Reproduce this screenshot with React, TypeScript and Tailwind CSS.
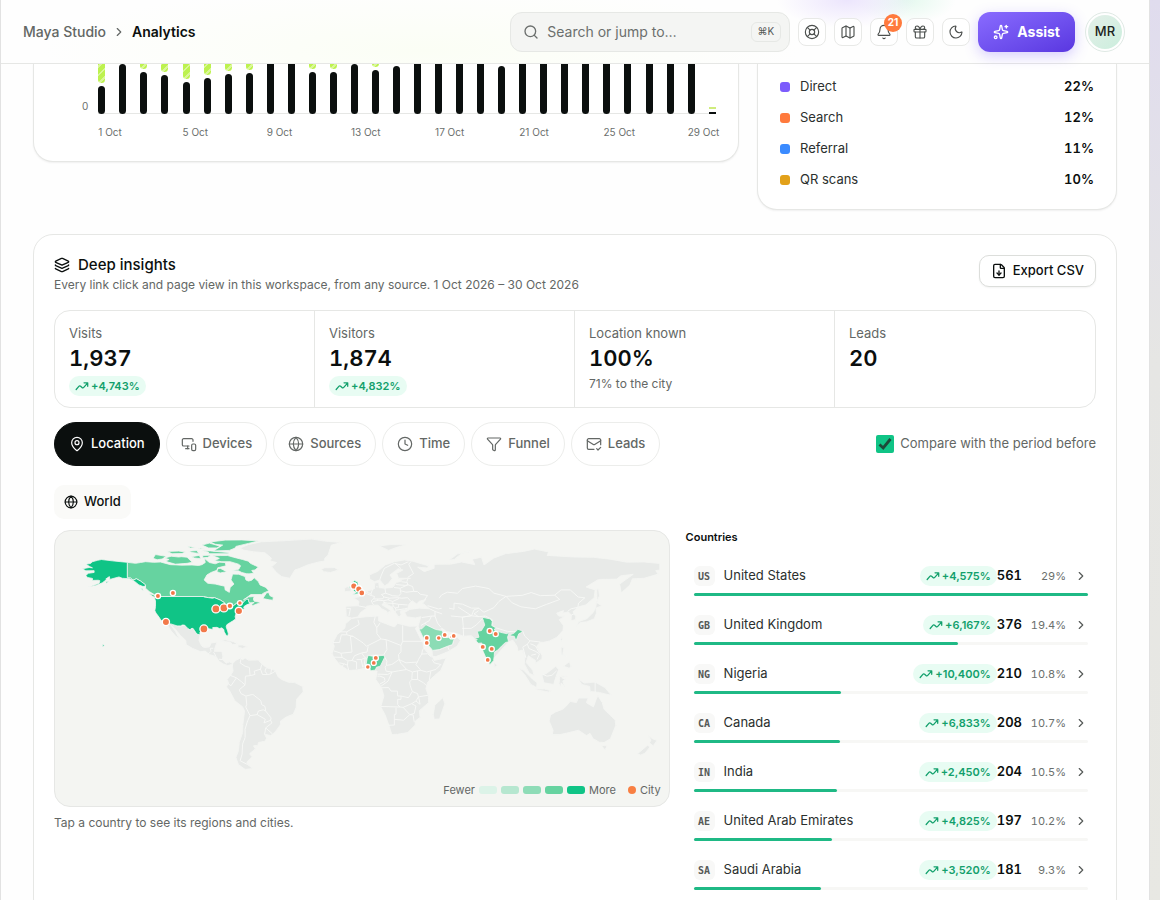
import React from 'react';
import {
  Bell,
  ChevronRight,
  Clock,
  FileDown,
  Funnel,
  Gift,
  Globe,
  Layers,
  LifeBuoy,
  MailCheck,
  Map as MapIcon,
  MapPin,
  MonitorSmartphone,
  Moon,
  Search,
  Sparkles,
} from 'lucide-react';

// px height of the lower (black) segment of each day
const days = [
  28, 50, 42, 39, 32, 36, 40, 41, 60, 60, 42, 42, 50, 44, 48, 60, 60, 60, 60, 48, 60, 60, 60, 60, 60, 60, 60, 60, 60, 2,
];

const channels = [
  { name: 'Direct', share: '22%', color: 'bg-[#7c5cfc]' },
  { name: 'Search', share: '12%', color: 'bg-[#ff7a3d]' },
  { name: 'Referral', share: '11%', color: 'bg-[#3b8bff]' },
  { name: 'QR scans', share: '10%', color: 'bg-[#e2a11a]' },
];

const stats = [
  { label: 'Visits', value: '1,937', change: '+4,743%' },
  { label: 'Visitors', value: '1,874', change: '+4,832%' },
  { label: 'Location known', value: '100%', note: '71% to the city' },
  { label: 'Leads', value: '20' },
];

const tabs = [
  { label: 'Location', icon: MapPin },
  { label: 'Devices', icon: MonitorSmartphone },
  { label: 'Sources', icon: Globe },
  { label: 'Time', icon: Clock },
  { label: 'Funnel', icon: Funnel },
  { label: 'Leads', icon: MailCheck },
];

const countries = [
  { code: 'US', name: 'United States', change: '+4,575%', visits: 561, share: '29%' },
  { code: 'GB', name: 'United Kingdom', change: '+6,167%', visits: 376, share: '19.4%' },
  { code: 'NG', name: 'Nigeria', change: '+10,400%', visits: 210, share: '10.8%' },
  { code: 'CA', name: 'Canada', change: '+6,833%', visits: 208, share: '10.7%' },
  { code: 'IN', name: 'India', change: '+2,450%', visits: 204, share: '10.5%' },
  { code: 'AE', name: 'United Arab Emirates', change: '+4,825%', visits: 197, share: '10.2%' },
  { code: 'SA', name: 'Saudi Arabia', change: '+3,520%', visits: 181, share: '9.3%' },
];

// Outlines are longitude / latitude pairs, projected by the group transform
const land = [
  // Greenland
  'M-73 78.2L-68 80.3L-60 82L-50 82.4L-40 83L-30 83.6L-22 82.4L-12 81.5L-18 80L-19 77L-20 74L-22 72L-22 70.4L-25 70L-32 68.2L-37 66L-40 65L-43 60L-48 61L-51 63.5L-54 67L-51 69.5L-55 70.5L-54 72L-58 75.4L-65 76L-71 77Z',
  // Mexico and Central America
  'M-117.1 32.5L-114.8 32.5L-111 31.3L-108.2 31.3L-106.5 31.8L-104.7 29.9L-103.2 28.9L-101.4 29.8L-99.1 26.4L-97.2 25.9L-97.8 22.5L-96.2 19.2L-94.5 18.2L-91.5 18.6L-90.4 21L-87 21.5L-88.2 18L-88.5 15.8L-84 15.8L-83.4 13L-83.7 11L-81.5 8.8L-79.5 9.5L-77.4 8.6L-78.3 8L-80.4 7.4L-83 8.3L-85.7 10L-87.5 12.9L-91.5 14L-94 16.1L-97 15.8L-101.8 17.8L-105.5 20L-105.7 22.5L-109 25.6L-112.8 30.2L-114.7 31.7L-112 28L-109.5 23.2L-112 25.3L-114.5 28.2L-116 30.5Z',
  // Caribbean
  'M-84.8 22L-82 23L-77 21.8L-74.3 20.2L-77.5 20L-79 21.6Z',
  'M-74.3 19.7L-71.7 19.8L-68.5 18.6L-71.5 17.8L-74.2 18.4Z',
  // South America
  'M-77.4 8.6L-75.5 10.6L-72.5 12L-71.5 10.8L-70 12L-68 10.6L-62 10.7L-60 8.5L-57 6L-52 4.5L-50 0.5L-48 -1L-44 -2.7L-40 -2.9L-35.3 -5.3L-35 -8.5L-39 -13L-39.2 -17.8L-41 -22L-45 -23.5L-48.6 -26L-48.7 -28.3L-52 -32.8L-54.5 -34.8L-58.3 -34L-57 -36.4L-58 -38.2L-62 -39L-62.3 -40.8L-65 -41L-63.8 -42.8L-67.3 -45.8L-65.8 -47.6L-69 -50.8L-68.4 -52.4L-65.3 -54.7L-70 -55.2L-74 -52.3L-75.5 -48L-74 -44L-73.5 -39L-71.5 -33L-71.3 -28L-70.3 -20L-71.5 -17.5L-76.2 -13.8L-79.2 -8L-81.2 -5.5L-80 -3L-80.8 -1L-78.8 1.4L-77.2 4L-77.6 7Z',
  // Iceland, Ireland, Svalbard
  'M-24 65.5L-22 66.3L-16 66.4L-13.7 65L-18.5 63.5L-22.5 64Z',
  'M-10 52L-6.3 52.2L-6 54L-8 55.2L-10 54Z',
  'M11 79.5L18 80.3L27 80.2L21 78.5L16.5 76.8Z',
  // Iberia to Scandinavia and on through Russia to the Pacific
  'M-9.3 43.1L-1.8 43.4L-1.3 46L-4.6 48.3L-1.6 48.7L1.8 50.9L4.5 52.5L8 53.7L8.2 57L10.6 57.6L10.8 54.3L14.2 54L19 54.5L21.3 57.4L24.4 58.4L23.5 59.3L29.8 60L22.5 60L21.4 63L25.3 65L22.3 65.8L17.3 62L18.8 60L16.5 57L14.2 55.4L11.2 59L8 58L5.2 59.5L5 62L10 64.2L14.5 68L20 70L26 71L31 70.3L40.5 67.5L40 66.2L34 66.7L38 64L44 66L44 68.4L54 68.5L60.5 69.8L68.5 68.2L67 71.5L72.5 72.7L74 68L80 72.2L87 74.8L98 76.2L104.5 77.6L113 75.8L112 73.8L128 72.8L140 72.6L150 71.5L160 69.7L170.5 69.8L180 68.9L180 65L177.5 64.6L179 62.5L170.5 60L163.5 59.7L162 56L156.8 51.2L155.8 56.5L164 62.4L156.5 61.5L154 59.5L143 59.3L135.5 54.7L141 53L140.4 48.3L135.5 44L131 42.8L127.6 39.8L129.4 36.8L129 35L126.5 34.5L126.7 37.7L125 39.7L121.5 39L122 40.5L117.8 39L119 37.2L122.5 37L119.3 35L121.9 31.5L121.6 28.5L118 24.5L113.5 22.2L109.8 21.4L107.8 21.5L105.8 19L109 13.5L109 11.4L105 8.7L105 10.5L102.5 12.2L100.8 13.4L99.4 9.3L103.4 4.5L104.2 1.4L101.3 2.8L98.4 8.3L98.7 13L97.2 16.8L94.5 16L94 18.8L91.5 22.7L88.8 21.7L77.5 9L72.8 20.5L70 21L68 23.8L66.5 25.4L61.5 25.1L57 26.9L51.5 27.9L48.5 30L48 29.5L50.2 26.5L51.5 24.5L56.3 26.2L59.8 22.5L57.7 19L52.2 15.7L45 12.8L43 13L42.7 16.5L39 21.2L35 28L34.9 29.5L34.3 31.2L36 36.8L32.5 36.1L27.5 36.8L26.2 39.4L29.3 41.2L35 42L41.5 41.5L37 45L39 47.2L35 46.2L33.5 44.5L30.7 46.5L28.5 44L28.2 41.5L23.5 40.4L24 38L22.8 36.5L19.4 41L19 42.4L13.6 45.3L12.5 44L16 41.8L18.4 40L16.5 39.8L16 38L15.6 40L12.3 41.7L10.3 43.8L7.5 43.8L3.2 43.2L3 41.8L-0.4 39.4L-2 36.7L-5.6 36L-9 37Z',
  'M53 71L58 74.6L68 76.8L61 75.3L56 71.3Z',
  // Japan, Sakhalin, Taiwan, Sri Lanka
  'M130 31.5L131 33.8L136 35.6L140 39.5L141.5 43L141.8 45.4L145 43.5L141.5 42L141.8 39L140.5 35.6L136 33.8L132 33.3Z',
  'M143 54L143.6 49.5L142.2 46.2L142 53Z',
  'M121.5 25.2L120.2 23L121 22Z',
  'M80 9.6L81.8 7.5L80.3 6Z',
  // Africa
  'M-5.8 35.8L3 36.8L10.5 37.2L10.5 34.3L15.5 32.3L20 30.6L22 32.8L29 31L34.2 31.2L32.6 29.8L35.5 24L37.3 21L37.5 18.5L39.5 15.5L43.2 12.3L44 10.5L51.2 11.9L48 4.5L44 1.2L40 -2.7L39 -6.5L40.5 -10.8L40.6 -15L35 -19.8L35.5 -23.8L32.7 -26L32.5 -28.5L28 -33L22 -34L18.5 -34.2L17 -29.5L14.5 -22.5L11.8 -17.5L13.7 -11L12.2 -5.8L8.8 -1L9.6 4L6 4.3L4.3 6.4L-2 4.8L-7.6 4.4L-13 8L-16.7 12.5L-17.4 14.7L-16.2 19L-17 21.2L-14.5 26L-9.8 30L-9.5 32.5Z',
  'M49.2 -12L50.4 -15.7L47.2 -24.8L44 -25L43.5 -22L44.4 -16.5Z',
  // Islands of South East Asia
  'M95.3 5.6L98 4.5L103.5 -1L106 -3L105.7 -5.8L102.3 -4L98.7 1.7Z',
  'M105.3 -6.7L110.5 -6.8L114.5 -7.8L113 -8.5L106.5 -7.4Z',
  'M109 1.5L111.5 2.5L115.5 5.5L117.2 7L119 5L117.5 1L116 -4L110.2 -3Z',
  'M119.3 -3.5L119.8 0.7L125 1.4L120.8 0L123 -1L121.5 -2L122.5 -5L120.5 -3L120.3 -5.5Z',
  'M120.5 18.4L122.2 18.3L121.5 14.3L124 13L120.6 14.2Z',
  'M122 7L125.5 9.7L126.4 7L125.4 5.8Z',
  'M131 -0.8L134.5 -3.2L141 -2.6L147 -6L150.7 -10.4L147 -9.7L143.5 -8.8L138 -8.2L137.8 -5.2L133 -4Z',
  // Australia and New Zealand
  'M114.2 -22.5L117 -20.7L121.5 -19L123.7 -17L126 -14.2L129.7 -15L131 -12.2L136.8 -12.2L135.7 -15L140 -17.6L141.7 -12.8L142.7 -10.8L145.3 -15L146.4 -19L149.5 -22L153.1 -25.5L153.4 -28.8L150.2 -36.8L146.4 -39L143.5 -38.8L139.7 -36.6L138 -33.5L135.8 -34.8L131 -31.6L124 -33.3L119.8 -34.2L115.2 -34.2L115.7 -31.7L113.3 -26Z',
  'M144.8 -40.8L148.2 -41L147 -43.5Z',
  'M172.8 -34.5L175.5 -36.7L178.3 -37.8L176 -41L173.8 -39.2L174.7 -37.5Z',
  'M172.7 -40.6L174 -41.8L171 -45.5L168.5 -46.5L166.6 -45.8Z',
];

const borders = [
  // Americas
  'M-92 14.5L-90.5 16L-91 17.8L-89.2 17.8M-89 15.5L-87.5 13M-83.6 11L-85.7 11.2',
  'M-78.8 1.4L-75.2 0L-72 -2.5L-70 -4.3L-73.5 -7.2L-72.5 -9.5L-69.5 -11L-69 -16L-69.6 -17.6L-67 -22.8L-68.5 -26L-70 -31L-70 -36L-71.5 -40L-71.8 -46L-73 -50L-68.5 -52.3',
  'M-80.3 -3.5L-78.5 -4.8L-75.2 0M-72.3 12L-73 9L-70 7L-67.4 6.2L-67 1.3L-69.8 1L-70 -4.2M-67 1.3L-64 2L-64.5 4L-60.7 5.2L-60 8M-60.7 5.2L-59.5 2L-56.5 2L-54.5 2.3L-51.7 4M-57.2 6L-58 4L-56.5 2M-54 5.6L-54.5 2.3',
  'M-69.5 -11L-65.3 -10L-60.5 -13.8L-60 -16.2L-58 -17.2L-57.6 -20L-59 -19.3L-62 -20L-62.7 -22.2L-67 -22.8M-57.6 -20L-55.8 -22.3L-54.3 -24.2L-54.6 -25.6L-58.6 -27.2L-57.8 -25L-62.7 -22.2M-54.6 -25.6L-53.8 -27.2L-57.6 -30.2L-53.5 -33.8M-57.6 -30.2L-58.2 -34',
  // Europe
  'M-1.8 43.4L3.1 42.4M-8.8 41.9L-6.5 41.8L-7.4 37.2M2.5 51L6 49.6L8.1 49L7.5 47.6L6 46.4L7.5 43.8M3.4 51.4L6 50.8L6.8 53.4M6 50.8L6 49.6M7.5 47.6L9.6 47.5L10.4 46.8L7 45.9M9.6 47.5L13 47.6L13.8 48.7L12.2 50.2L14.8 51L14.3 54',
  'M10.4 46.8L13.7 46.5L16.2 47L17 48L13.8 48.7M14.8 51L18.8 49.5L22.5 49.2L24 50.8L23.6 52.5L23.5 54L19.8 54.4M17 48L22 48.3L24.5 48L28 48.3L30 46M16.2 47L19 46L22.8 47.8M19 46L19 44.9L22.5 44.3L28 43.9M13.7 46.5L13.6 45.5L15.7 45L19 44.9M19 44.9L19.3 43.2L18.5 42.4M19.3 43.2L20.5 42.2L22.4 42.3L22.5 44.3M20.5 42.2L21 40.8L20.2 39.6M21 40.8L26.3 41.6L28 42',
  'M23.6 52.5L27 51.6L31.7 52.1L34 52L35.5 50.4L40 49.6L38.2 47.1M31.7 52.1L31 55L28.2 56.1L23.5 54M28.2 56.1L27.5 58L28.1 59.5M21 56.2L26.5 55.7L28.2 56.1M24.3 57.9L27.5 57.5M11.2 59L12.2 62L14 66L20 69L24 68L28.5 70M24 65.8L20.5 69M30 70L28.6 68.5L31.5 62.8L28 60.5M9 54.9L10 54.8',
  // Asia
  'M47 48L48.5 50L52 51.6L58 51L61 53.8L69 55.3L77 53.8L80 51L87.3 49.1L83 46L80 42.3L74 39.5L70.8 42L66.5 42L61 44.4L56 45L55.9 41.3L53 42M87.3 49.1L97 49.7L102.5 51.4L108 49.5L116.6 49.8L119.7 47.2L111.5 44.2L105 41.6L96.3 42.8L91 45.2L87.3 49.1M116.6 49.8L120.5 53L126 53L130.8 48.7L134.8 48.2L131 45L130.6 42.5L126.5 41.6L124.4 40',
  'M126.6 37.8L128.4 38.6M40 43.5L46.5 41.5L48.5 41.9M41.5 41.5L44.5 40L48.8 38.5M44.5 40L44.5 37.2L42.4 37.2L36.5 36.3M44.5 37.2L46 33L48 30.5M42.4 37.2L41 34.4L38.8 33.2L36 31.5M38.8 33.2L39 32L44.7 29.2L48.4 28.6M54 37.3L61 36.6L61.5 31.4L61.7 25.1M61 36.6L66.5 37.4L71 36.8L74.8 37.3L69.3 31.8L66.3 29.8L60.9 29.8M61 36.6L66.5 37.4L58.5 42.6M66.5 37.4L68 41L71 42M71 36.8L68 38.5L70.8 40.5',
  'M74.8 37.3L79 35L78.7 31.5L81 30.2L88 28L92 27.8L97.3 28.2M97.3 28.2L98.7 25L101.7 22.3L107.9 21.6M101.7 22.3L100.2 20.3L97.4 18.5L99.3 12M100.2 20.3L101.1 17.7L105 16L107.5 14.4L106 11M102 20.5L105 19.3L107.5 15M102.5 13.6L105.5 14.3M109.6 2L112 1L115 1.5L117.8 4.2M141 -2.6L141 -9M43 16.6L47 17L52 19L53.1 16.6M52 19L55 20L55.7 22.5L51.6 24.2',
  // Africa
  'M-8.7 27.7L-8.7 25.9L-4.9 25L1.2 21L3.2 19L11.9 23.4L15 23L24 19.5L25 22L25 31.6M-8.7 27.7L-1.2 32.2L-2 35M8.5 36.9L7.6 33.5L9.4 30.2L9.5 26.5L11.9 23.4M9.4 30.2L11.5 33.2M25 22L36.8 22M-13 27.7L-8.7 27.7M-17 21.3L-13 21.3L-12 25.9L-8.7 25.9M-4.9 25L-6.5 25L-5.5 15.5L-12.2 14.8L-16.4 16.2M-12.2 14.8L-11.5 12.3L-16.7 12.5M-11.5 12.3L-8 10.2L-8.3 7.6L-7.5 4.4M-13.2 9L-10.5 8.5L-11.4 6.8M-10.5 8.5L-8.3 7.6',
  'M-8 10.2L-5.5 10.4L-2.8 9.6L-2.8 5.2M-5.5 10.4L-4 13.3L0.2 15L3.5 15.5L4.2 19M0.2 15L2.4 12L0 11L-2.8 11M0 11L1 6.2M2.4 12L1.6 6.4M2.4 12L3.6 11.7L2.7 6.4M3.6 11.7L4.2 13.5L13.5 13.7L15.5 17L15 23M13.5 13.7L14.2 12.5L15.5 10L15.2 7.5L18.5 8L22.8 11L22.5 14L24 15.7L24 19.5',
  'M22.8 11L27 9L33.9 9.5L34.5 11L36.5 14.3L37 17L38.5 18M36.5 14.3L40 14.5L42.4 12.5M43 11L42.8 10.9L44 9L48 8L45 5L42 4.2L41 -1.6M42 4.2L39.5 3.5L36 4.5L34 4.2L30.8 3.5L27.4 5L22.5 4.2L18.6 3.5L15 4L14.4 6.5L15.2 7.5M33.9 9.5L33 8L36 4.5M27.4 5L24 8.7L22.8 11M34 4.2L34 -1L37.6 -3L39.2 -4.6M34 -1L30.5 -1L30.8 3.5M30.5 -1L29.2 -2.5L29.5 -4.5L30.8 -8.3L34 -9.5L34.5 -11.5L40.4 -10.5',
  'M9.8 2.2L16 2L18.6 3.5L16.2 -2L12 -5M9.8 1L11.3 1L14 0L14.4 -2L11.2 -3.8M12.3 -6L16.5 -5.9L18 -8L21.8 -8L22 -11L24 -11L24 -13L22 -13L22 -16.2L23.4 -17.6L12 -17.3M24 -11L28.5 -12L30.8 -8.3M23.4 -17.6L25.3 -17.8L30.4 -15.6L33 -14L34.5 -11.5M25.3 -17.8L29.3 -22.2L32 -21.5L33 -17L30.4 -15.6M33 -14L35.5 -16L34.6 -11.5M21 -17.9L21 -22L20 -22L20 -28.5L16.5 -28.6M20 -25L25.5 -25.6L29.3 -22.2L31.3 -22.4L32 -26.8',
];

const unitedStates = [
  'M-124.7 48.4L-123 49L-95.2 49L-94.6 48.7L-92 48.3L-89.6 48L-88.4 48.3L-84.8 46.8L-83.6 46L-82.5 45.3L-82.4 43L-83.1 42L-82.5 41.7L-79 42.7L-79 43.3L-76.8 43.6L-75 45L-71.5 45L-70.3 46.2L-69.2 47.4L-68 47.3L-67.8 45.7L-67 44.8L-69 44L-70.6 43L-70.8 42.2L-70 41.7L-72 41.2L-74 40.6L-74.2 39.5L-75.5 38.5L-76 37L-75.7 35.5L-77.5 34.2L-79 33.3L-81 32L-81.4 30.7L-80.5 28.2L-80.1 26.5L-80.4 25.2L-81.3 25.5L-82.6 27.7L-82.8 29.1L-84 30.1L-85.4 29.7L-87 30.4L-89.5 30.3L-89.4 29.1L-91.5 29.5L-94 29.7L-95.5 28.9L-97.2 27.6L-97.2 25.9L-99.1 26.4L-100.5 28.5L-101.4 29.8L-102.5 29.7L-103.2 28.9L-104.7 29.9L-106.5 31.8L-108.2 31.8L-108.2 31.3L-111 31.3L-114.8 32.5L-117.1 32.5L-118.4 34L-120.6 34.6L-121.9 36.6L-123.7 39L-124.4 40.4L-124 43L-124 46.3Z',
  'M-141 60.3L-141 69.6L-145 70L-150 70.5L-156.6 71.3L-159 70.8L-162 70L-163 69L-166 68.4L-163.5 67L-162 66.3L-164 66.5L-168 65.7L-166 64.5L-161 64.6L-161 63.5L-164.5 63L-166 61.7L-165 60.5L-162 59.9L-162 58.7L-158.5 58.8L-157.5 58.5L-158 57L-162 55.5L-164.8 54.7L-160 55.6L-156 57.3L-153.5 59.2L-154 59.5L-151.8 61L-151.5 59.3L-149 60L-146 60.8L-144 60L-139.5 59.7L-136.7 58.2L-134 56L-131.5 55L-130 55.3L-130.2 56.2L-133 58.3L-135.5 59.7L-137.5 58.9L-139 60.1Z',
  'M-154 57.9L-152.3 58.2L-153.5 57Z',
  'M-156 20.4L-154.8 19.5L-155.8 18.7Z',
];

const canada = [
  'M-141 69.6L-136 69L-133 69.5L-130 70L-125 69.6L-121 69.8L-115 68.2L-108 67.9L-102 68L-98 67.7L-96 68.2L-94 69.5L-94.5 72L-91.5 69.5L-88 68.7L-85.5 69.7L-82 69.5L-81.5 67.5L-86.5 66.3L-87 64.8L-90.5 63.5L-93 62L-94.7 59L-92.5 57L-88 56.5L-82.3 55.2L-82 53L-79.5 51.5L-79 54.5L-76.7 56.5L-78.5 59L-77.5 62.5L-73.8 62.4L-70 61L-69.5 59L-68 58.3L-66 58.8L-64.5 60.3L-62 58L-61 56L-57.5 54.5L-55.7 52.5L-59 51L-60 50.2L-66.5 50.2L-69.5 48L-71 47L-68 48.7L-64.5 49L-65 47.5L-64.5 46.2L-61 45.5L-61.5 45L-65.5 43.5L-66 44.3L-64.5 45.4L-67 45.2L-67.8 45.7L-68 47.3L-69.2 47.4L-70.3 46.2L-71.5 45L-75 45L-76.8 43.6L-79 43.3L-79 42.7L-82.5 41.7L-82.4 43L-82.5 45.3L-84.8 46.8L-88.4 48.3L-92 48.3L-95.2 49L-123 49L-124.8 50.2L-127.8 52L-130 54L-130 56L-133 58.3L-135.5 59.7L-137.5 58.9L-139 60.1L-141 60.3Z',
  'M-128 50.8L-125 50L-123.5 48.5L-125.5 48.8Z',
  'M-133 54L-131.8 53.8L-131.3 52.3Z',
  'M-59.3 47.8L-57 51.3L-55.7 51.3L-55 49.5L-53 48.5L-53.2 46.8L-55.5 47Z',
  'M-89.5 73.5L-85 73.7L-80.5 73.7L-77 72.7L-71.5 71.3L-68 70.3L-66.8 69L-62 66.8L-64 65L-66 64.7L-64.8 63L-68.8 62.5L-66 61.9L-72 63.5L-74 64.5L-78 64.5L-73.8 65.5L-72.7 67.5L-74 68.5L-79 70L-84 70L-88.5 70.6L-85.5 72Z',
  'M-117 69.9L-112 68.5L-105 69L-101.8 69.6L-105 72.7L-108.5 73L-110 72.8L-114.5 73.3L-118.5 72.2L-115.8 71.3L-117.5 70.6Z',
  'M-125.5 72L-124 74.3L-117.5 73.2L-120 71.6L-123 71.2Z',
  'M-117 76.2L-110 76.4L-106 75.8L-108 74.9L-114 74.8Z',
  'M-102.5 73L-97.5 73.8L-96.7 71.8L-100.5 72.2Z',
  'M-95.5 73.8L-90.5 73.9L-92.5 72.6L-95.5 72.3Z',
  'M-104 76.3L-99 76.7L-98 75L-102 75.5Z',
  'M-96.5 76.7L-91 76.5L-80 75.5L-80.2 74.8L-91.7 74.8L-92.2 75.8Z',
  'M-96 80L-91.5 81.2L-85 79.3L-87 78.3L-92 78.3Z',
  'M-91 81.9L-82 83L-72 83.1L-61.8 82.5L-68 81L-75.5 79.2L-76 78.2L-79.5 76.8L-89 76.5L-87 77.8L-83.5 80L-88 80.5Z',
  'M-105 79.3L-99.5 78.6L-103 78.2ZM-98 78.2L-94.5 77.8L-97 77.6Z',
  'M-86.5 65.7L-85 66L-81 64L-85 63.2L-87 64Z',
];

const unitedKingdom = [
  'M-5.5 50.1L1.3 51.2L1.7 52.7L0 53.5L-1.8 55.5L-2 57.7L-4 58.6L-6.2 57L-3.2 54.7L-4.7 52.5L-3 51.4Z',
  'M-8 54.3L-5.6 54.4L-6.5 55.2Z',
];

const nigeria = ['M3.6 11.7L4.2 13.5L7 13L13.5 13.5L14.2 12.5L11.5 7L9.2 6.4L8.5 4.7L6 4.3L4.3 6.4L2.7 6.4Z'];

const saudi = [
  'M34.9 29.4L36.5 29.5L39 32L44.7 29.2L48.4 28.5L50.2 26.5L51 24.5L51.6 24.2L55.2 24.8L56.2 26L56.2 24L55.7 22.5L55 20L52 19L47 17L43 16.5L42.3 17.5L39 21.2L37 25Z',
];

const india = [
  'M73 36.5L77.8 35.5L79 34L78.7 31.5L81 30.2L80.2 28.8L84 27.4L88.1 26.5L88.2 27.9L89 26.5L88.2 24.5L88.8 21.7L87 21.3L85 19.5L82.3 16.7L80.3 15.5L80.2 13L79.8 10.3L77.6 8L76.3 9.8L74.8 13L73 17L72.7 21L70.8 20.8L69 22.3L70 23L68.2 23.7L71 24.5L70 28L72.5 28.5L74.5 31.8L73.8 34Z',
  'M89.8 26L92 26.8L94.5 29.2L97 28.3L97 27.5L95 26.5L93.3 22.3L92.3 25L89.9 25.3Z',
];

// x, y and radius on the map canvas
const cities = [
  [104, 66, 2.6], [119, 63, 2.6], [112, 92, 3.6], [150, 99, 4], [162, 79, 4], [170, 78, 4], [176, 76, 2.8],
  [185, 81, 3.7], [186, 73, 2.4], [300, 56, 3.2], [305, 59, 3.2], [308, 63, 3], [373, 108, 2.5], [373, 113, 2.5],
  [385, 108, 2.4], [391, 105, 2.5], [398, 107, 2], [400, 106, 2.5], [322, 128, 2.6], [320, 133, 2.5],
  [314, 137, 2.4], [436, 101, 2.6], [442, 104, 2.6], [429, 117, 2.6], [438, 119, 2.6], [434, 130, 2.5],
];

const Shapes: React.FC<{ paths: string[]; fill: string }> = ({ paths, fill }) => (
  <path d={paths.join('')} fill={fill} stroke="#f4f5f2" strokeWidth={0.8} strokeLinejoin="round" vectorEffect="non-scaling-stroke" />
);

const WorldMap: React.FC = () => (
  <svg viewBox="1 1 614 275" className="block w-full" role="img" aria-label="Visits by country">
    <g transform="translate(307.4 147.9) scale(1.66 -1.66)">
      <Shapes paths={land} fill="#e8eae8" />
      <path d={borders.join('')} fill="none" stroke="#f7f8f6" strokeWidth={0.9} strokeLinejoin="round" vectorEffect="non-scaling-stroke" />
      <Shapes paths={canada} fill="#66d3a0" />
      <Shapes paths={unitedStates} fill="#10c486" />
      <Shapes paths={unitedKingdom} fill="#35cb92" />
      <Shapes paths={nigeria} fill="#5fd09d" />
      <Shapes paths={saudi} fill="#8bdcb5" />
      <Shapes paths={india} fill="#66d3a0" />
    </g>
    {cities.map(([x, y, r]) => (
      <circle key={`${x}-${y}`} cx={x} cy={y} r={r} fill="#f2794a" stroke="#ffffff" strokeWidth={1.3} />
    ))}
  </svg>
);

const Trend: React.FC<{ value: string }> = ({ value }) => (
  <span className="inline-flex h-5 items-center gap-0.5 rounded-full bg-[#e8fcf3] px-1.5 text-[11px] font-semibold text-[#12a06c]">
    <svg viewBox="0 0 24 24" className="h-3.5 w-3.5" fill="none" stroke="currentColor" strokeWidth="2.2" strokeLinecap="round" strokeLinejoin="round">
      <path d="M2 18l4.6-5.4c1-1.2 2-1.3 3.1-.3l2.3 2.2c1 1 2.1.9 3-.2L21.5 7M15.5 6.5h6.3v6" />
    </svg>
    {value}
  </span>
);

const iconButton =
  'relative flex h-7 w-7 items-center justify-center rounded-lg border border-[#e8e9e7] bg-white text-[#4b4f4d]';

const Header: React.FC = () => (
  <header className="relative z-10 flex h-16 shrink-0 items-center justify-between border-b border-[#e6e7e5] bg-[radial-gradient(70px_28px_at_846px_0px,#ece5fd,transparent),radial-gradient(50px_24px_at_905px_0px,#e4f9ee,transparent),radial-gradient(380px_64px_at_420px_50px,#fbfef5,transparent)] pr-6 pl-[22px]">
    <nav aria-label="Breadcrumb" className="flex items-center gap-1.5 text-sm">
      <a href="#studio" className="font-medium text-[#636765]">Maya Studio</a>
      <ChevronRight className="h-3.5 w-3.5 text-[#636765]" />
      <span className="font-semibold text-[#0b0f0e]">Analytics</span>
    </nav>
    <div className="flex items-center gap-2">
      <button type="button" className="flex h-10 w-[280px] items-center gap-2 rounded-xl border border-[#e6e8e5] bg-[#f4f5f3] pr-2 pl-3 text-sm text-[#6b6f6d]">
        <Search className="h-4 w-4" />
        <span className="flex-1 text-left">Search or jump to…</span>
        <kbd className="flex h-5 items-center rounded-md border border-[#e6e8e5] px-1.5 font-['Inter',sans-serif] text-[10px] text-[#565a58]">⌘K</kbd>
      </button>
      <button type="button" aria-label="Help" className={iconButton}><LifeBuoy className="h-4 w-4" strokeWidth={1.7} /></button>
      <button type="button" aria-label="Tour" className={iconButton}><MapIcon className="h-4 w-4" strokeWidth={1.7} /></button>
      <button type="button" aria-label="Notifications" className={iconButton}>
        <Bell className="h-4 w-4" strokeWidth={1.7} />
        <span className="absolute -top-[5px] -right-[5px] flex h-[18px] min-w-[18px] items-center justify-center rounded-full bg-[#ff7a3d] px-1 text-[10px] font-bold text-white">21</span>
      </button>
      <button type="button" aria-label="Rewards" className={iconButton}><Gift className="h-4 w-4" strokeWidth={1.7} /></button>
      <button type="button" aria-label="Dark mode" className={iconButton}><Moon className="h-4 w-4" strokeWidth={1.7} /></button>
      <button type="button" className="flex h-10 items-center gap-2 rounded-xl bg-linear-to-br from-[#8a6bff] to-[#5a36e0] px-[15px] text-sm font-bold text-white shadow-[0_4px_14px_rgba(124,92,252,0.3)]">
        <Sparkles className="h-4 w-4" />
        Assist
      </button>
      <button type="button" className="ml-0.5 flex h-10 w-10 items-center justify-center rounded-full border border-[#dfe9e4] bg-white p-0.5 text-[13px] font-medium text-[#1b2320]">
        <span className="flex h-full w-full items-center justify-center rounded-full bg-linear-to-br from-[#e4efe9] to-[#cbeedd]">MR</span>
      </button>
    </div>
  </header>
);

const DailyChart: React.FC = () => (
  <section className="rounded-b-[20px] border border-t-0 border-[#e6e7e5] bg-white pr-[22px] pb-[22px] pl-12 shadow-[0_1px_2px_rgba(0,0,0,0.06)]">
    <div className="flex gap-2.5">
      <span className="flex h-[50px] items-end text-[10px] leading-4 text-[#6b6f6d]">0</span>
      <div className="relative flex flex-1 justify-between">
        <div className="absolute top-[49px] right-0 left-0 h-px bg-[#e6e7e5]" />
        {days.map((height, index) => (
          <div key={index} className="relative w-[7px]">
            <div className="flex h-[50px] flex-col-reverse gap-[3px] overflow-hidden">
              <div
                className={height > 2 ? 'w-full shrink-0 rounded-full bg-[#0b0f0e]' : 'w-full shrink-0 bg-[#0b0f0e]'}
                style={{ height }}
              />
              {height > 2 ? (
                <div className="h-10 w-full shrink-0 rounded-full bg-[repeating-linear-gradient(135deg,#bdf24f_0px,#bdf24f_4px,#d9f798_4px,#d9f798_6px)]" />
              ) : (
                <div className="h-0.5 w-full shrink-0 bg-[#cfec7c]" />
              )}
            </div>
            <div className="h-[25px] w-0 pt-2.5 text-[10px] leading-4 whitespace-nowrap text-[#6b6f6d]">
              {index % 4 === 0 ? `${index + 1} Oct` : null}
            </div>
          </div>
        ))}
      </div>
    </div>
  </section>
);

const ChannelList: React.FC = () => (
  <section className="rounded-b-[20px] border border-t-0 border-[#e6e7e5] bg-white px-[22px] pt-[7px] pb-3.5 shadow-[0_1px_2px_rgba(0,0,0,0.06)]">
    <ul>
      {channels.map((channel) => (
        <li key={channel.name} className="flex h-[31px] items-center gap-2.5 text-[13px] text-[#2b302e]">
          <span className={`h-2.5 w-2.5 rounded-[3px] ${channel.color}`} />
          <span className="flex-1">{channel.name}</span>
          <span className="font-semibold text-[#0b0f0e] tabular-nums">{channel.share}</span>
        </li>
      ))}
    </ul>
  </section>
);

const CountryList: React.FC = () => (
  <div>
    <h3 className="text-[11px] leading-[14px] font-semibold text-[#0b0f0e]">Countries</h3>
    <div className="mt-[13px] flex flex-col gap-0.5">
      {countries.map((country) => (
        <button key={country.code} type="button" className="block w-full px-2 pt-[9px] pb-2 text-left">
          <span className="flex h-5 items-center">
            <span className="flex h-5 w-[21px] items-center justify-center rounded-md bg-[#f8f8f7] font-['DejaVu_Sans_Mono',monospace] text-[10px] font-bold text-[#565a58]">
              {country.code}
            </span>
            <span className="ml-[9px] flex-1 text-[13px] text-[#2b302e]">{country.name}</span>
            <Trend value={country.change} />
            <span className="text-[13px] font-semibold text-[#0b0f0e] tabular-nums">{country.visits}</span>
            <span className="ml-2 w-9 text-right text-[11px] text-[#6b6f6d] tabular-nums">{country.share}</span>
            <ChevronRight className="ml-2 h-3.5 w-3.5 text-[#565a58]" />
          </span>
          <span className="mt-[7px] block h-[3px] rounded-full bg-[#f7f7f5]">
            <span
              className="block h-full rounded-full bg-[#1fb985]"
              style={{ width: `${(country.visits / countries[0].visits) * 100}%` }}
            />
          </span>
        </button>
      ))}
    </div>
  </div>
);

const DeepInsights: React.FC = () => (
  <section className="mt-6 rounded-[20px] border border-[#e6e7e5] bg-white p-5">
    <div className="flex items-start justify-between">
      <div>
        <h2 className="flex h-5 items-center gap-2 text-[15px] font-medium text-[#0b0f0e]">
          <Layers className="h-4 w-4" />
          Deep insights
        </h2>
        <p className="text-xs leading-5 text-[#636765]">
          Every link click and page view in this workspace, from any source. 1 Oct 2026 – 30 Oct 2026
        </p>
      </div>
      <button type="button" className="flex h-8 items-center gap-1.5 rounded-[10px] border border-[#dcdedb] bg-white px-[11px] text-[13px] font-medium text-[#0b0f0e] shadow-xs">
        <FileDown className="h-4 w-4" />
        Export CSV
      </button>
    </div>

    <div className="mt-[15px] grid grid-cols-4 divide-x divide-[#e6e7e5] rounded-2xl border border-[#e6e7e5]">
      {stats.map((stat) => (
        <div key={stat.label} className="h-24 px-3.5 pt-[13px]">
          <p className="text-[13px] leading-[18px] text-[#636765]">{stat.label}</p>
          <p className="text-[22px] leading-[33px] font-semibold text-[#0b0f0e] tabular-nums">{stat.value}</p>
          {stat.change && <Trend value={stat.change} />}
          {stat.note && <p className="text-xs leading-[18px] text-[#636765]">{stat.note}</p>}
        </div>
      ))}
    </div>

    <div className="mt-3.5 flex items-center justify-between">
      <div className="flex gap-1.5">
        {tabs.map((tab, index) => (
          <button
            key={tab.label}
            type="button"
            className={
              index === 0
                ? 'flex h-11 items-center gap-1.5 rounded-full border border-[#0b0f0e] bg-[#0b0f0e] px-3.5 text-[13px] font-medium text-white'
                : 'flex h-11 items-center gap-1.5 rounded-full border border-[#ecedeb] bg-white px-3.5 text-[13px] font-medium text-[#636765]'
            }
          >
            <tab.icon className="h-4 w-4" strokeWidth={1.8} />
            {tab.label}
          </button>
        ))}
      </div>
      <label className="flex items-center gap-1.5 text-[13px] text-[#636765]">
        <span className="relative h-[18px] w-[18px]">
          <input type="checkbox" defaultChecked className="block h-[18px] w-[18px] appearance-none rounded-[2px] bg-[#10c486]" />
          <svg viewBox="0 0 18 18" className="pointer-events-none absolute inset-0" fill="none" stroke="#1d4a39" strokeWidth="2.8">
            <path d="M3.5 9.5L7.2 13L14.5 4" />
          </svg>
        </span>
        Compare with the period before
      </label>
    </div>

    <button type="button" className="mt-[19px] flex h-[34px] items-center gap-1.5 rounded-[10px] bg-[#fafaf8] px-2.5 text-[13px] font-medium text-[#0b0f0e]">
      <Globe className="h-3.5 w-3.5" />
      World
    </button>

    <div className="mt-[11px] grid grid-cols-[3fr_2fr] items-start gap-4">
      <div>
        <div className="relative overflow-hidden rounded-2xl border border-[#e6e7e5] bg-[#f4f5f2]">
          <WorldMap />
          <div className="absolute right-2 bottom-2 flex items-center gap-1 text-[11px] leading-4 text-[#636765]">
            Fewer
            <span className="h-2 w-[18px] rounded-[3px] bg-[#dcf3e8]" />
            <span className="h-2 w-[18px] rounded-[3px] bg-[#b6e7d0]" />
            <span className="h-2 w-[18px] rounded-[3px] bg-[#8edcb7]" />
            <span className="h-2 w-[18px] rounded-[3px] bg-[#66d3a0]" />
            <span className="h-2 w-[18px] rounded-[3px] bg-[#10c486]" />
            More
            <span className="ml-2 h-2 w-2 rounded-full bg-[#f87f43]" />
            City
          </div>
        </div>
        <p className="mt-1.5 text-xs leading-5 text-[#636765]">Tap a country to see its regions and cities.</p>
      </div>
      <CountryList />
    </div>
  </section>
);

export default function App() {
  return (
    <div className="flex h-screen overflow-hidden bg-linear-to-b from-[#e0dcee] via-[#e6e6e4] via-40% to-[#e8e8e3] pr-2.5 font-['Inter','Liberation_Sans',sans-serif]">
      <div className="flex min-w-0 flex-1 flex-col border-x border-[#e2e2e2] bg-[#fefefe]">
        <Header />
        <main className="min-h-0 flex-1 overflow-hidden px-8">
          <div className="grid grid-cols-[1fr_360px] items-start gap-[18px]">
            <DailyChart />
            <ChannelList />
          </div>
          <DeepInsights />
        </main>
      </div>
    </div>
  );
}
